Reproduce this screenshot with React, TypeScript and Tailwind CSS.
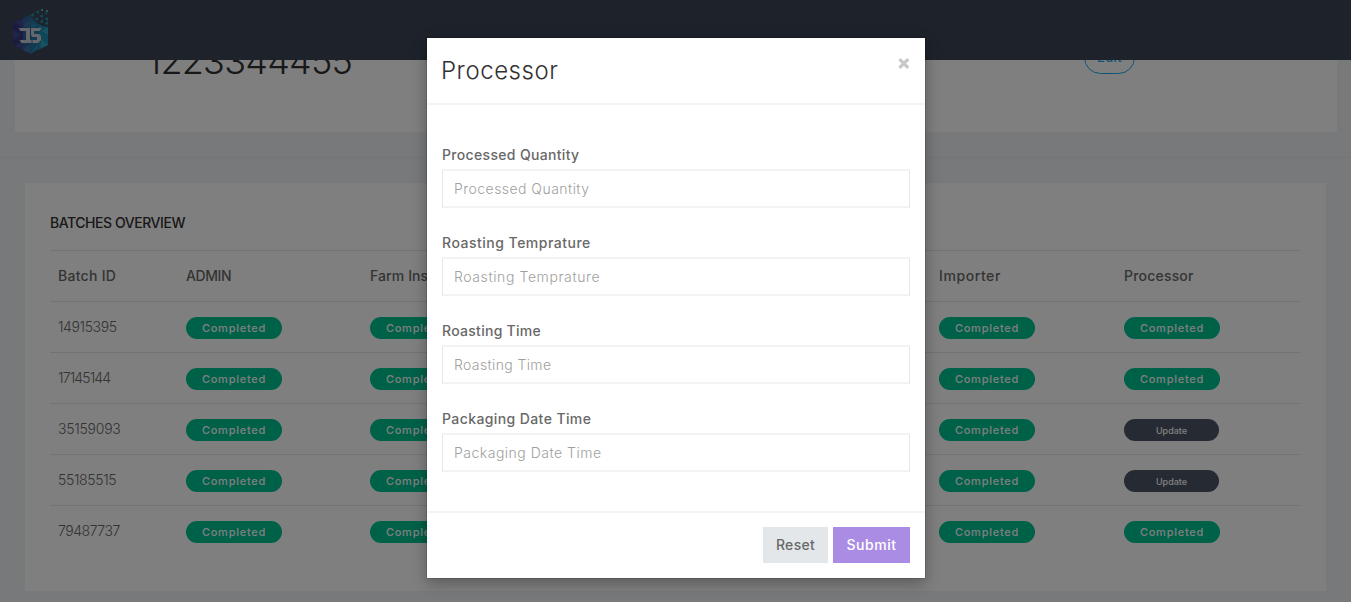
import React from "react";

const fields = [
  { label: "Processed Quantity", labelClass: "tracking-[0.33px]", hintClass: "tracking-[0.46px]" },
  { label: "Roasting Temprature", labelClass: "tracking-[0.5px]", hintClass: "tracking-[0.6px]" },
  { label: "Roasting Time", labelClass: "tracking-[0.28px]", hintClass: "tracking-[0.37px]" },
  { label: "Packaging Date Time", labelClass: "tracking-[0.4px]", hintClass: "tracking-[0.5px]" },
];

const columns = [
  { name: "Batch ID", spacing: "tracking-[0.28px]" },
  { name: "ADMIN", spacing: "tracking-[-0.4px]" },
  { name: "Farm Inspector", spacing: "tracking-[0.1px]" },
  { name: "Harvester", spacing: "tracking-[0px]" },
  { name: "Exporter", spacing: "tracking-[0px]" },
  { name: "Importer", spacing: "tracking-[0.58px]" },
  { name: "Processor", spacing: "tracking-[0.2px]" },
];

const batches = [
  { id: "14915395", processed: true, spacing: "tracking-[-0.4px]" },
  { id: "17145144", processed: true, spacing: "tracking-[-0.85px]" },
  { id: "35159093", processed: false, spacing: "tracking-[-0.25px]" },
  { id: "55185515", processed: false, spacing: "tracking-[-0.35px]" },
  { id: "79487737", processed: true, spacing: "tracking-[-0.45px]" },
];

const rowGrid = "grid grid-cols-[128px_184px_190px_190px_189px_185px_185px] h-[51px] border-t border-[#e4e7ea] items-center";

function Badge() {
  return (
    <span className="flex h-[22px] w-24 items-center justify-center rounded-full bg-[#00c292] pt-px text-[11px] font-medium tracking-[0.75px] text-white">
      Completed
    </span>
  );
}

function Logo() {
  return (
    <svg className="ml-3 mt-2 block" width="38" height="48" viewBox="0 0 38 48">
      <path d="M1 15 11 10v32L1 37Z" fill="#35397f" />
      <path d="M11 10 18.500 7v39L11 42Z" fill="#345f98" />
      <path d="M18.500 7l3 5 5 4v25l-8 5Z" fill="#2379a8" />
      <path d="M26.500 16l4 2 5.500 1v18l-9.500 5Z" fill="#1e8fb6" />
      <path d="M1 22l8 5-8 5Z M3 14l8-3v9Z M3 38l8-6v10Z" fill="#404b8f" />
      <path d="M11 17l7-5v9Z M11 42l7-6v9Z" fill="#3d74a6" />
      <path d="M19 15l7 2-7 4Z M19 45l7-10v6Z" fill="#2b88b4" />
      <path d="M36 19v8l-6-4Z M36 37l-7-6v9Z" fill="#32a5c5" />
      <path d="M18 7l4-2v4Z M23 4l4-2v4Z M29 2l2-1v2Z M22 11l4-2v4Z M27 8l4-2v4Z M32 5l3-1v3Z M27 14l4-3v4Z M32 11l4-2v4Z M32 16l4-3v4Z" fill="#238eac" />
      <path d="M29 1h2v2h-2Z M34 2h2v2h-2Z" fill="#62b4b9" />
      <path d="M6.500 20H18v12h1.500v3H9.500L7.500 32H14v-9H8.500Z" fill="#ccced8" />
      <path d="M19 20h10.500l-2 3H22v3h5l2 2v4l-3 3h-5.500v-3H25v-3h-4.500L19 27Z" fill="#ccced8" />
    </svg>
  );
}

export default function App() {
  return (
    <div className="relative h-[602px] w-full overflow-hidden bg-[#f0f3f6] font-['Inter','Open_Sans',sans-serif] text-sm text-[#686868]">
      <header className="flex h-[60px] items-start bg-[#3d4554]">
        <Logo />
      </header>

      <section className="ml-[15px] mr-[14px] flex h-[72px] overflow-hidden bg-white">
        <div className="-mt-[21px] ml-[132px] w-[937px] text-[36px] font-light leading-[44px] tracking-[-0.75px] text-[#313131]">
          1223344455
        </div>
        <div className="-mt-[19px] flex h-[33px] w-[51px] items-center justify-center rounded-full border border-[#1babe8] pb-px text-[13px] font-medium tracking-[0.4px] text-[#1babe8]">
          Edit
        </div>
      </section>
      <div className="h-[26px] border-b border-[#e7eaec]" />

      <main className="ml-[25px] mr-[25px] mt-[25px] h-[408px] bg-white px-[25px] pt-[29px]">
        <h3 className="h-[38px] text-[14px] font-medium leading-[22px] tracking-[-0.45px] text-[#313131]">BATCHES OVERVIEW</h3>
        <div className={rowGrid}>
          {columns.map((c) => (
            <div key={c.name} className={`whitespace-nowrap pl-2 text-[14px] font-medium ${c.spacing}`}>
              {c.name}
            </div>
          ))}
        </div>
        {batches.map((b) => (
          <div key={b.id} className={rowGrid}>
            <div className={`pl-2 text-[14px] font-light ${b.spacing}`}>{b.id}</div>
            {[0, 1, 2, 3, 4].map((i) => (
              <div key={i} className="pl-2 pt-0.5"><Badge /></div>
            ))}
            <div className="pl-2 pt-0.5">
              {b.processed ? (
                <Badge />
              ) : (
                <span className="flex h-[22px] w-[95px] items-center justify-center rounded-full bg-[#4c5667] pt-0.5 text-[9px] font-medium text-white">
                  Update
                </span>
              )}
            </div>
          </div>
        ))}
      </main>

      <div className="absolute inset-0 flex items-start justify-center bg-black/50 pt-[38px]">
        <form className="ml-px h-[540px] w-[498px] bg-white shadow-[0_5px_15px_rgba(0,0,0,0.3),0_0_0_1px_rgba(0,0,0,0.12)]">
          <div className="flex h-[67px] items-start justify-between border-b-2 border-[#f3f4f5] px-[15px]">
            <h4 className="-ml-px pt-[15px] text-[24px] font-light leading-9 tracking-[0.55px] text-[#313131]">Processor</h4>
            <svg className="mt-5 block" width="12" height="11" viewBox="0 0 12 11">
              <path d="M1.500 1.200 10.200 9.800M10.200 1.200 1.500 9.800" stroke="#c8c8c8" strokeWidth="3.300" />
            </svg>
          </div>
          <div className="flex h-[406px] flex-col gap-[24px] px-[15px] pt-[39px]">
            {fields.map((f) => (
              <div key={f.label} className="h-[64px]">
                <div className={`h-[25px] text-[14px] font-medium leading-[22px] ${f.labelClass}`}>{f.label}</div>
                <div className={`h-[39px] border-x border-y-2 border-x-[#e4e7ea] border-y-[#f2f3f4] pl-[11px] text-[14px] font-light leading-[35px] text-[#a0a0a0] ${f.hintClass}`}>
                  {f.label}
                </div>
              </div>
            ))}
          </div>
          <div className="flex h-[67px] justify-end gap-[5px] border-t-2 border-[#f3f4f5] px-[15px] pt-[14px]">
            <button type="button" className="h-9 w-[65px] bg-[#e4e7ea] text-[14px] font-medium tracking-[0.3px] text-[#686868]">Reset</button>
            <button type="button" className="h-9 w-[77px] bg-[#ab8ce4] text-[14px] font-medium tracking-[0.55px] text-white">Submit</button>
          </div>
        </form>
      </div>
    </div>
  );
}
